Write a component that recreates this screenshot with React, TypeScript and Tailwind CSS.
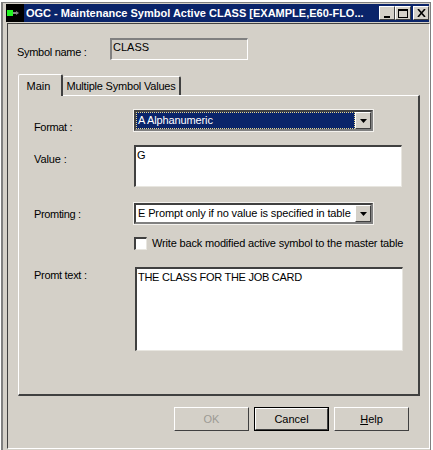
const font = { fontFamily: '"Liberation Sans", Arial, sans-serif' };

function Arrow() {
  return (
    <svg width="7" height="4" viewBox="0 0 7 4" className="block">
      <path d="M0 0h7L3.5 4z" fill="#000" />
    </svg>
  );
}

function Combo({ text, selected }: { text: string; selected?: boolean }) {
  return (
    <div className="w-[239px] h-[21px] bg-white border-2 border-t-[#404040] border-l-[#404040] border-r-[#808080] border-b-[#808080] outline outline-1 outline-[#f4f2ee] flex">
      <div className={`flex-1 flex items-center whitespace-nowrap overflow-hidden pl-[1px] text-[11px] leading-none tracking-[-0.12px] ${selected ? 'bg-[#0a246a] text-white border border-dotted border-[#e8d890]' : 'text-black m-[1px]'}`}>
        {text}
      </div>
      <div className="w-[16px] shrink-0 bg-[#d4d0c8] border border-t-white border-l-white border-r-[#404040] border-b-[#404040] flex items-center justify-center">
        <Arrow />
      </div>
    </div>
  );
}

function Button({ label, def, disabled, children }: { label?: string; def?: boolean; disabled?: boolean; children?: React.ReactNode }) {
  return (
    <div className={`w-[75px] h-[24px] flex items-center justify-center text-[11px] bg-[#d4d0c8] ${def ? 'border border-black' : ''}`}>
      <div className={`w-full h-full flex items-center justify-center border border-t-white border-l-white border-r-[#404040] border-b-[#404040] ${disabled ? 'text-[#9c9a94]' : 'text-black'}`}>
        {label}
        {children}
      </div>
    </div>
  );
}

function TitleButton({ children, className }: { children: React.ReactNode; className?: string }) {
  return (
    <div className={`w-[16px] h-[14px] bg-[#d4d0c8] border border-t-white border-l-white border-r-[#404040] border-b-[#404040] flex items-center justify-center ${className ?? ''}`}>
      {children}
    </div>
  );
}

export default function App() {
  return (
    <div style={font} className="w-[433px] h-[450px] bg-[#d4d0c8] overflow-hidden text-black border-l border-t-2 border-r-2 border-white">
      <div className="h-[448px] border-l-2 border-t border-r border-[#808080] pt-[1px] pl-[3px] pr-[1px] pb-[1px] flex flex-col">
        {/* title bar */}
        <div className="h-[18px] bg-[#0a246a] flex items-center shrink-0">
          <div className="w-[18px] h-[18px] bg-black flex items-center pl-[1px] shrink-0">
            <div className="w-[6px] h-[6px] bg-[#22f522]" />
            <div className="w-[3px] h-[2px] bg-[#888]" />
            <svg width="3" height="4" viewBox="0 0 3 4"><path d="M0 0l3 2-3 2z" fill="#888" /></svg>
          </div>
          <div className="ml-[2px] flex-1 whitespace-nowrap overflow-hidden text-white font-bold text-[11px]">
            OGC - Maintenance Symbol Active CLASS [EXAMPLE,E60-FLO...
          </div>
          <div className="flex items-center shrink-0">
            <TitleButton>
              <div className="w-[6px] h-[2px] bg-black mt-[7px] -ml-[1px]" />
            </TitleButton>
            <TitleButton>
              <div className="w-[10px] h-[9px] border border-black border-t-2" />
            </TitleButton>
            <TitleButton className="ml-[2px]">
              <svg width="9" height="8" viewBox="0 0 9 8"><path d="M1 0l7 8M8 0L1 8" stroke="#000" strokeWidth="1.6" fill="none" /></svg>
            </TitleButton>
          </div>
        </div>

        {/* client area */}
        <div className="flex-1 border-l border-t border-[#404040] border-r border-r-white border-b border-b-white pl-[10px] ml-[1px] -mr-[1px] mt-[1px] flex flex-col">
          <div className="flex mt-[14px] h-[22px]">
            <div className="w-[92px] pt-[6px] -ml-[1px] text-[11px] leading-[16px] tracking-[-0.3px]">Symbol name :</div>
            <div className="w-[138px] h-[22px] border-2 border-t-[#808080] border-l-[#808080] border-r-white border-b-white border-r border-b ml-[1px] text-[11px] leading-[14px] pl-[1px]">
              CLASS
            </div>
          </div>

          {/* tabs */}
          <div className="flex items-end mt-[14px] h-[21px] relative z-10">
            <div className="w-[45px] h-[22px] bg-[#d4d0c8] border-l border-t border-white border-r-2 border-r-[#404040] text-[11px] flex items-start justify-center pt-[3px] pr-[3px] rounded-t-[2px] -mb-[1px]">
              Main
            </div>
            <div className="w-[118px] h-[19px] border-t border-white border-r-2 border-r-[#404040] text-[11px] tracking-[-0.2px] flex items-center justify-center whitespace-nowrap rounded-t-[2px]">
              Multiple Symbol Values
            </div>
          </div>

          {/* tab panel */}
          <div className="w-[402px] h-[301px] border-l border-t border-white border-r-2 border-r-[#404040] border-b-2 border-b-[#404040] pl-[15px] flex flex-col">
            <div className="flex mt-[14px] h-[21px]">
              <div className="w-[100px] pt-[9px] text-[11px] leading-[16px] tracking-[-0.35px]">Format :</div>
              <Combo text="A Alphanumeric" selected />
            </div>
            <div className="flex mt-[14px] h-[42px]">
              <div className="w-[100px] pt-[6px] text-[11px] leading-[16px] tracking-[-0.1px]">Value :</div>
              <div className="w-[268px] h-[42px] bg-white border-2 border-t-[#404040] border-l-[#404040] border-r-[#e8e6e0] border-b-[#e8e6e0] border-r border-b text-[11px] leading-[14px] pl-[1px] pt-[1px]">
                G
              </div>
            </div>
            <div className="flex mt-[16px] h-[21px]">
              <div className="w-[100px] pt-[3px] text-[11px] leading-[16px] tracking-[-0.35px]">Promting :</div>
              <Combo text="E Prompt only if no value is specified in table" />
            </div>
            <div className="flex items-center mt-[13px] h-[13px] ml-[100px]">
              <div className="w-[13px] h-[13px] shrink-0 bg-white border-2 border-t-[#404040] border-l-[#404040] border-r-[#e8e6e0] border-b-[#e8e6e0] border-r border-b" />
              <div className="ml-[5px] text-[11px] tracking-[-0.17px] whitespace-nowrap">Write back modified active symbol to the master table</div>
            </div>
            <div className="flex mt-[17px] h-[84px]">
              <div className="w-[101px] text-[11px] leading-[16px] tracking-[-0.3px]">Promt text :</div>
              <div className="w-[268px] h-[84px] bg-white border-2 border-t-[#404040] border-l-[#404040] border-r-[#e8e6e0] border-b-[#e8e6e0] border-r border-b text-[11px] leading-[14px] tracking-[-0.27px] pl-[1px] pt-[1px]">
                THE CLASS FOR THE JOB CARD
              </div>
            </div>
          </div>

          <div className="flex gap-[5px] mt-[11px] ml-[156px]">
            <Button label="OK" disabled />
            <Button label="Cancel" def />
            <Button>
              <span><span className="underline">H</span>elp</span>
            </Button>
          </div>
        </div>
      </div>
    </div>
  );
}
